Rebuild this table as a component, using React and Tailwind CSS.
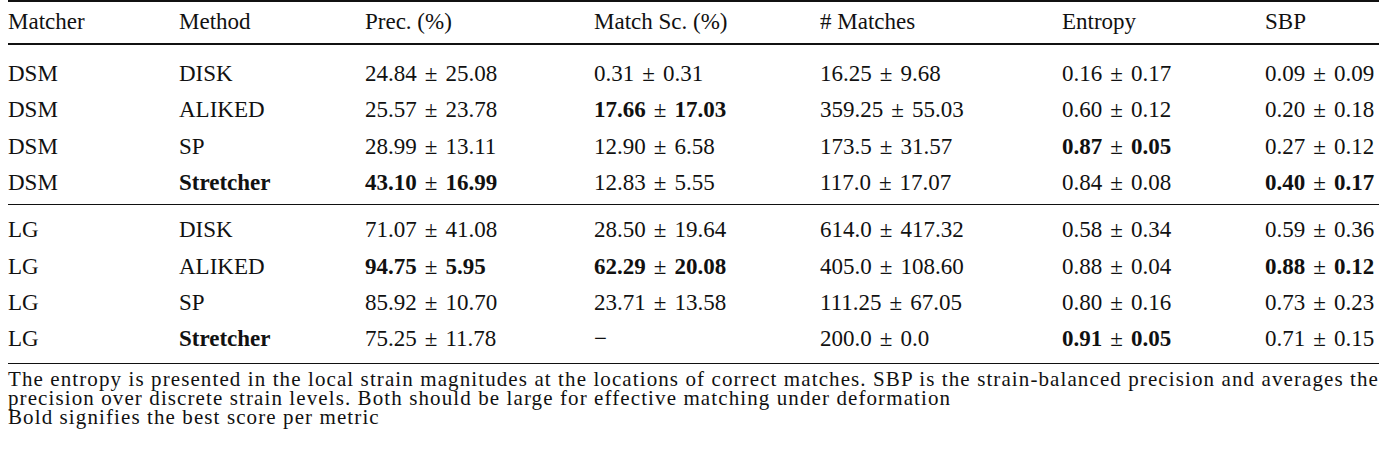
const cols = "grid grid-cols-[171px_186px_229px_226px_242px_203px_1fr]";

const rowsA = [
  ["DSM", "DISK", ["24.84", "25.08"], ["0.31", "0.31"], ["16.25", "9.68"], ["0.16", "0.17"], ["0.09", "0.09"]],
  ["DSM", "ALIKED", ["25.57", "23.78"], ["17.66", "17.03", true], ["359.25", "55.03"], ["0.60", "0.12"], ["0.20", "0.18"]],
  ["DSM", "SP", ["28.99", "13.11"], ["12.90", "6.58"], ["173.5", "31.57"], ["0.87", "0.05", true], ["0.27", "0.12"]],
  ["DSM", "Stretcher", ["43.10", "16.99", true], ["12.83", "5.55"], ["117.0", "17.07"], ["0.84", "0.08"], ["0.40", "0.17", true]],
];

const rowsB = [
  ["LG", "DISK", ["71.07", "41.08"], ["28.50", "19.64"], ["614.0", "417.32"], ["0.58", "0.34"], ["0.59", "0.36"]],
  ["LG", "ALIKED", ["94.75", "5.95", true], ["62.29", "20.08", true], ["405.0", "108.60"], ["0.88", "0.04"], ["0.88", "0.12", true]],
  ["LG", "SP", ["85.92", "10.70"], ["23.71", "13.58"], ["111.25", "67.05"], ["0.80", "0.16"], ["0.73", "0.23"]],
  ["LG", "Stretcher", ["75.25", "11.78"], null, ["200.0", "0.0"], ["0.91", "0.05", true], ["0.71", "0.15"]],
];

function Val({ v }) {
  if (!v) return <span>&minus;</span>;
  const [a, b, bold] = v;
  return (
    <span>
      <span className={bold ? "font-bold" : ""}>{a}</span>
      <span className="mx-[8px]">&plusmn;</span>
      <span className={bold ? "font-bold" : ""}>{b}</span>
    </span>
  );
}

function Row({ r }) {
  return (
    <div className={`${cols} h-[36.33px] items-center`}>
      <div>{r[0]}</div>
      <div className={r[1] === "Stretcher" ? "font-bold" : ""}>{r[1]}</div>
      {r.slice(2).map((v, i) => (
        <div key={i}>
          <Val v={v} />
        </div>
      ))}
    </div>
  );
}

export default function App() {
  return (
    <div className="bg-white w-[1387px] h-[459px] px-2 text-[#111] font-['Liberation_Serif',serif]">
      <div className="border-t-2 border-[#111] text-[23px]">
        <div className={`${cols} h-[43px] items-center border-b-2 border-[#111]`}>
          <div>Matcher</div>
          <div>Method</div>
          <div>Prec. (%)</div>
          <div>Match Sc. (%)</div>
          <div># Matches</div>
          <div>Entropy</div>
          <div>SBP</div>
        </div>
        <div className="pt-[11px] pb-[3px] border-b border-[#111]">
          {rowsA.map((r, i) => (
            <Row key={i} r={r} />
          ))}
        </div>
        <div className="pt-[7px] pb-[5px] border-b-[1.5px] border-[#111]">
          {rowsB.map((r, i) => (
            <Row key={i} r={r} />
          ))}
        </div>
      </div>
      <div className="pt-[6px] text-[21px] leading-[19px] tracking-[1.1px] whitespace-nowrap">
        <p>
          The entropy is presented in the local strain magnitudes at the locations of correct matches. SBP is the
          strain-balanced precision and averages the
          <br />
          precision over discrete strain levels. Both should be large for effective matching under deformation
        </p>
        <p>Bold signifies the best score per metric</p>
      </div>
    </div>
  );
}
